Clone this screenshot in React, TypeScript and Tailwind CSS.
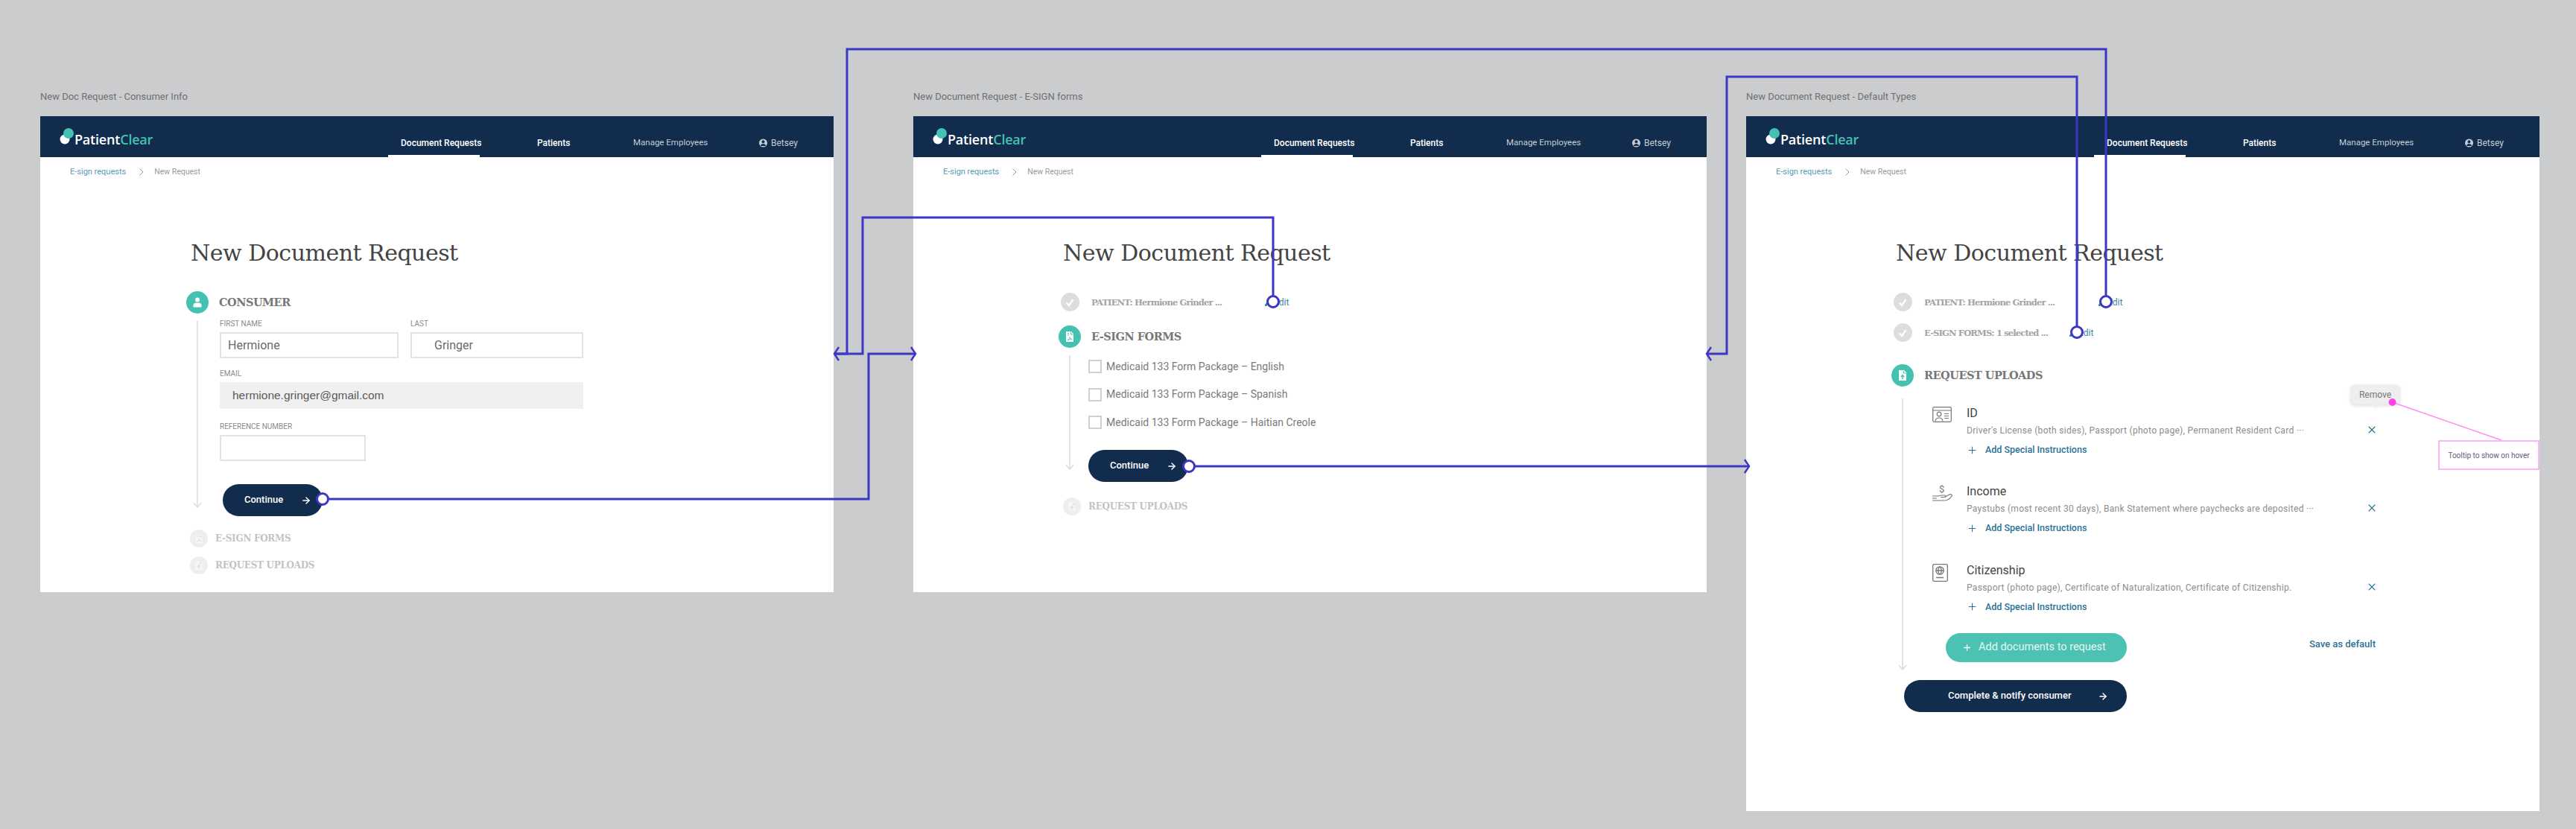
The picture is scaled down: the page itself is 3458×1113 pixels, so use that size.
import { ArrowRight, Plus, X } from "lucide-react";

const navy = "bg-[#122c4d]";
const slab = "font-['DejaVu_Serif',serif]";

function UserIcon({ size = 14 }: { size?: number }) {
  return (
    <svg width={size} height={size} viewBox="0 0 14 14" fill="#fff">
      <circle cx="7" cy="3.6" r="3" />
      <path d="M1.5 13.5v-2.6c0-2 1.6-3.4 3.4-3.4h4.2c1.800 0 3.400 1.400 3.400 3.400v2.600z" />
    </svg>
  );
}

function PdfIcon({ fill = "#fff", mark = "#45c1b1", size = 16 }: { fill?: string; mark?: string; size?: number }) {
  return (
    <svg width={size} height={size} viewBox="0 0 16 16">
      <path d="M3 1h7l3 3v11H3z" fill={fill} />
      <path d="M5 3.500h2M5 5.500h2M9.500 2v3h3" stroke={mark} strokeWidth="1" fill="none" />
      <path d="M5 12.500c2 0 3-2 3.200-3.800.5 2 2 3.200 3 3-1.800-.4-4.400 0-6.200.8z" fill="none" stroke={mark} strokeWidth="0.8" />
    </svg>
  );
}

function UploadIcon({ fill = "#fff", mark = "#45c1b1", size = 16 }: { fill?: string; mark?: string; size?: number }) {
  return (
    <svg width={size} height={size} viewBox="0 0 16 16">
      <path d="M3 1h7l3 3v11H3z" fill={fill} />
      <path d="M9.500 2v3h3" stroke={mark} strokeWidth="1" fill="none" />
      <path d="M8 13V8M5.800 10 8 7.600l2.200 2.400" stroke={mark} strokeWidth="1.400" fill="none" />
    </svg>
  );
}

function DoneDot() {
  return (
    <div className="flex h-[25px] w-[25px] shrink-0 items-center justify-center rounded-full bg-[#dddddd]">
      <svg width="14" height="14" viewBox="0 0 14 14" fill="none" stroke="#fff" strokeWidth="2.400">
        <path d="M2.500 7.500 6 11l5.500-8" />
      </svg>
    </div>
  );
}

function StepLine({ height }: { height: string }) {
  return (
    <div className={`flex w-[30px] shrink-0 flex-col items-center ${height}`}>
      <div className="w-[2px] flex-1 bg-[#e4e4e4]" />
      <svg width="12" height="8" viewBox="0 0 12 8" className="-mt-[7px]" fill="none" stroke="#dcdcdc" strokeWidth="1.500">
        <path d="M1 1l5 6 5-6" />
      </svg>
    </div>
  );
}

function EditLink() {
  return (
    <div className="flex items-center gap-[2px] text-[12px] text-[#3d86a5]">
      <svg width="10" height="10" viewBox="0 0 10 10" fill="#3d86a5">
        <path d="M0 10V7.800L6.500 1.200l2.200 2.200L2.200 10z" />
      </svg>
      <span>Edit</span>
    </div>
  );
}

function DoneRow({ text, width }: { text: string; width: string }) {
  return (
    <div className="flex items-center">
      <div className="flex w-[30px] justify-center">
        <DoneDot />
      </div>
      <div className={`ml-[14px] ${width} ${slab} text-[11.500px] font-bold leading-[14px] tracking-[-0.85px] text-[#a3a3a3]`}>{text}</div>
      <EditLink />
    </div>
  );
}

function PendingRow({ icon, label }: { icon: React.ReactNode; label: string }) {
  return (
    <div className="flex items-center">
      <div className="flex h-[24px] w-[24px] items-center justify-center rounded-full bg-[#eeeeee]">{icon}</div>
      <span className={`ml-[10px] ${slab} text-[12px] font-bold tracking-[-0.3px] text-[#c3c3c3]`}>{label}</span>
    </div>
  );
}

function ActiveHead({ icon, label, gap }: { icon: React.ReactNode; label: string; gap: string }) {
  return (
    <div className="flex items-center">
      <div className="flex h-[30px] w-[30px] items-center justify-center rounded-full bg-[#45c1b1]">{icon}</div>
      <span className={`${gap} ${slab} text-[14.500px] font-bold tracking-[-0.5px] text-[#777777]`}>{label}</span>
    </div>
  );
}

function PrimaryButton({ label, width, textWidth }: { label: string; width: string; textWidth: string }) {
  return (
    <div className={`flex h-[43px] ${width} items-center rounded-full ${navy} text-[13px] font-medium text-white`}>
      <span className={`pb-[2px] ${textWidth}`}>{label}</span>
      <ArrowRight size={14} strokeWidth={2.500} />
    </div>
  );
}

function Header() {
  return (
    <div className={`flex h-[55px] whitespace-nowrap text-[12px] font-medium ${navy}`}>
      <div className="flex w-[467px] items-start pl-[26px] pt-[14px]">
        <svg width="20" height="24" viewBox="0 0 20 24">
          <circle cx="7" cy="17" r="6.500" fill="#fff" />
          <circle cx="12" cy="9" r="7" fill="#45c1b1" />
        </svg>
        <span className="mt-[7px] font-['Open_Sans',sans-serif] text-[18px] leading-[20px] font-semibold tracking-[-0.2px] text-white">
          Patient<span className="text-[#45c1b1]">Clear</span>
        </span>
      </div>
      <div className="mr-[77px] flex h-full w-[123px] items-center border-b-[3px] border-white pl-[17px] pt-[20px] text-white">
        Document Requests
      </div>
      <div className="flex h-full w-[129px] items-center border-b-[3px] border-transparent pt-[20px] text-white">Patients</div>
      <div className="flex h-full w-[169px] items-center border-b-[3px] border-transparent pt-[20px] text-[11.500px] font-normal text-[#c4ccd6]">
        Manage Employees
      </div>
      <div className="flex h-full items-center gap-[5px] border-b-[3px] border-transparent pt-[20px] font-normal text-[#c4ccd6]">
        <svg width="11" height="14" viewBox="0 0 10 12">
          <circle cx="5" cy="6" r="5" fill="#c4ccd6" />
          <circle cx="5" cy="4.400" r="1.800" fill="#122c4d" />
          <path d="M1.800 9.600c.3-2 1.600-2.700 3.200-2.700s2.900.7 3.200 2.700z" fill="#122c4d" />
        </svg>
        Betsey
      </div>
    </div>
  );
}

function Page({ children, pad, className }: { children: React.ReactNode; pad: string; className: string }) {
  return (
    <div className={`relative w-[1065px] bg-white ${className}`}>
      <Header />
      <div className="flex items-center pl-[40px] pt-[13px] text-[11px] leading-[14px]">
        <span className="text-[#5a9ab4]">E-sign requests</span>
        <svg width="8" height="12" viewBox="0 0 8 12" fill="none" stroke="#999" strokeWidth="1" className="ml-[17px] mr-[13px]">
          <path d="M1.500 1.500 6 6l-4.500 4.500" />
        </svg>
        <span className="text-[10.500px] text-[#9a9a9a]">New Request</span>
      </div>
      <div className={pad}>
        <h1 className={`ml-[6px] mt-[82px] ${slab} text-[30px] leading-[40px] tracking-[-0.5px] text-[#444444]`}>New Document Request</h1>
        {children}
      </div>
    </div>
  );
}

function Field({ label, className, children }: { label: string; className: string; children?: React.ReactNode }) {
  return (
    <div className={className}>
      <div className="h-[16px] text-[10px] leading-[10px] text-[#8a8a8a]">{label}</div>
      {children}
    </div>
  );
}

function ConsumerScreen() {
  const inputBox = "flex h-[35px] items-center border-2 border-[#e2e2e2] text-[16px] text-[#6a6a6a]";
  return (
    <Page pad="pl-[196px]" className="h-[639px]">
      <div className="mt-[31px]">
        <ActiveHead icon={<UserIcon />} label="CONSUMER" gap="ml-[14px]" />
      </div>
      <div className="mt-[9px] flex">
        <StepLine height="h-[252px] pt-[1px]" />
        <div className="ml-[15px] w-[488px]">
          <div className="flex gap-[16px]">
            <Field label="FIRST NAME" className="w-[240px]">
              <div className={`${inputBox} pl-[9px]`}>Hermione</div>
            </Field>
            <Field label="LAST" className="w-[232px]">
              <div className={`${inputBox} pl-[30px]`}>Gringer</div>
            </Field>
          </div>
          <Field label="EMAIL" className="mt-[16px]">
            <div className="flex h-[36px] items-center bg-[#f0f0f0] pl-[17px] font-['Liberation_Sans',sans-serif] text-[15.500px] text-[#5a5a5a]">
              hermione.gringer@gmail.com
            </div>
          </Field>
          <Field label="REFERENCE NUMBER" className="mt-[19px] w-[196px]">
            <div className={inputBox} />
          </Field>
          <div className="ml-[4px] mt-[31px]">
            <PrimaryButton label="Continue" width="w-[134px] pl-[29px]" textWidth="w-[76px]" />
          </div>
        </div>
      </div>
      <div className="ml-[5px] mt-[18px]">
        <PendingRow icon={<PdfIcon fill="#f6f6f6" mark="#dddddd" size={14} />} label="E-SIGN FORMS" />
      </div>
      <div className="ml-[5px] mt-[12px]">
        <PendingRow icon={<UploadIcon fill="#f6f6f6" mark="#dddddd" size={14} />} label="REQUEST UPLOADS" />
      </div>
    </Page>
  );
}

function FormsScreen() {
  const forms = ["English", "Spanish", "Haitian Creole"];
  return (
    <Page pad="pl-[195px]" className="h-[639px]">
      <div className="mt-[33px]">
        <DoneRow text="PATIENT: Hermione Grinder ..." width="w-[233px]" />
      </div>
      <div className="mt-[19px]">
        <ActiveHead icon={<PdfIcon />} label="E-SIGN FORMS" gap="ml-[14px]" />
      </div>
      <div className="mt-[10px] flex">
        <StepLine height="h-[154px]" />
        <div className="ml-[10px]">
          <div className="mt-[6px] flex flex-col gap-[19.500px]">
            {forms.map((name) => (
              <div key={name} className="flex h-[18px] items-center">
                <div className="h-[18px] w-[18px] border-2 border-[#cfcfcf]" />
                <span className="ml-[6px] text-[14px] text-[#7a7a7a]">Medicaid 133 Form Package – {name}</span>
              </div>
            ))}
          </div>
          <div className="mt-[28px]">
            <PrimaryButton label="Continue" width="w-[134px] pl-[29px]" textWidth="w-[76px]" />
          </div>
        </div>
      </div>
      <div className="ml-[6px] mt-[21px]">
        <PendingRow icon={<UploadIcon fill="#f6f6f6" mark="#dddddd" size={14} />} label="REQUEST UPLOADS" />
      </div>
    </Page>
  );
}

function IdIcon() {
  return (
    <svg width="26" height="21" viewBox="0 0 26 21" fill="none" stroke="#777" strokeWidth="1.200">
      <rect x="0.7" y="0.7" width="24.600" height="19.600" rx="1.500" />
      <path d="M1 5h24M16 9.500h6M16 12.500h6M16 15.500h6" />
      <circle cx="9" cy="10" r="2.800" />
      <path d="M4 19.500c.3-3 2.200-4.500 5-4.500s4.700 1.500 5 4.500" />
    </svg>
  );
}

function HandIcon() {
  return (
    <svg width="29" height="24" viewBox="0 0 29 24" fill="none" stroke="#777" strokeWidth="1.200" className="-ml-[1px]">
      <text x="10" y="10" fontSize="13" fill="#777" stroke="none" fontFamily="Roboto, sans-serif">$</text>
      <path d="M1 15h7c2 0 3-1 5-1h4.500c1.500 0 1.500 2.500 0 2.500H12" />
      <path d="M18 16l6-3c2-1 4 .5 3 2-2 3-6 6-10 6H1M1 18h6" />
    </svg>
  );
}

function PassportIcon() {
  return (
    <svg width="21" height="24" viewBox="0 0 21 24" fill="none" stroke="#777" strokeWidth="1.300">
      <rect x="0.7" y="0.7" width="19.600" height="22.600" rx="1.500" />
      <circle cx="10" cy="9" r="5.200" />
      <path d="M4.800 9h10.400M10 3.800c-3 3-3 7.400 0 10.400M10 3.800c3 3 3 7.400 0 10.400M5 18.500h10" />
    </svg>
  );
}

const uploads = [
  { title: "ID", desc: "Driver's License (both sides), Passport (photo page), Permanent Resident Card ···", icon: <IdIcon /> },
  { title: "Income", desc: "Paystubs (most recent 30 days), Bank Statement where paychecks are deposited ···", icon: <HandIcon /> },
  { title: "Citizenship", desc: "Passport (photo page), Certificate of Naturalization, Certificate of Citizenship.", icon: <PassportIcon /> },
];

function UploadsScreen() {
  return (
    <Page pad="pl-[195px]" className="h-[933px]">
      <div className="mt-[33px]">
        <DoneRow text="PATIENT: Hermione Grinder ..." width="w-[234px]" />
      </div>
      <div className="mt-[16px]">
        <DoneRow text="E-SIGN FORMS: 1 selected ..." width="w-[195px]" />
      </div>
      <div className="mt-[30px]">
        <ActiveHead icon={<UploadIcon />} label="REQUEST UPLOADS" gap="ml-[14px]" />
      </div>
      <div className="mt-[16px] flex">
        <StepLine height="h-[365px]" />
        <div className="ml-[25px] w-[598px] pt-[11px]">
          <div className="flex flex-col gap-[39.400px]">
            {uploads.map((item) => (
              <div key={item.title} className="flex h-[66px] items-start">
                <div className="w-[46px] shrink-0">{item.icon}</div>
                <div className="flex-1">
                  <div className="text-[16px] leading-[18px] text-[#444444]">{item.title}</div>
                  <div className="mt-[6px] text-[12px] leading-[16px] tracking-[0.3px] text-[#8c8c8c]">{item.desc}</div>
                  <div className="mt-[10px] flex items-center gap-[10px] text-[12.500px] font-medium leading-[16px] text-[#2a7294]">
                    <Plus size={15} strokeWidth={1.600} />
                    Add Special Instructions
                  </div>
                </div>
                <X size={16} strokeWidth={1.600} className="mt-[23px] shrink-0 text-[#2a7294]" />
              </div>
            ))}
          </div>
          <div className="mt-[27px] flex items-start justify-between pl-[18px] pr-[3px]">
            <div className="flex h-[39px] w-[243px] items-center rounded-full bg-[#4bc2b2] pl-[22px] text-[14.500px] text-[#e6f7f4]">
              <Plus size={13} strokeWidth={2.500} className="text-white" />
              <span className="ml-[9px]">Add documents to request</span>
            </div>
            <span className="mt-[7px] text-[13px] font-medium leading-[16px] text-[#2a7294]">Save as default</span>
          </div>
        </div>
      </div>
      <div className="ml-[17px] mt-[13px]">
        <PrimaryButton label="Complete & notify consumer" width="w-[299px] pl-[59px]" textWidth="w-[201px]" />
      </div>
      <div className="absolute left-[811px] top-[360px] flex h-[27px] w-[67px] items-center justify-center rounded-[6px] bg-[#eeeeee] text-[12px] text-[#777777] shadow-[0_2px_4px_rgba(0,0,0,0.12)]">
        Remove
        <div className="absolute -bottom-[4px] left-[30px] h-[8px] w-[8px] rotate-45 bg-[#eeeeee]" />
      </div>
      <div className="absolute left-[929px] top-[435px] flex h-[40px] w-[136px] items-center justify-center border-2 border-[#ffb4f6] text-[10px] text-[#5a6478]">
        Tooltip to show on hover
      </div>
    </Page>
  );
}

function Artboard({ left, label, children }: { left: string; label: string; children: React.ReactNode }) {
  return (
    <div className={`absolute top-[122px] ${left}`}>
      <div className="h-[34px] text-[13px] leading-[16px] text-[#6e7073]">{label}</div>
      {children}
    </div>
  );
}

function Connectors() {
  const blue = "#3d37c6";
  const dots: [number, number][] = [
    [433, 670],
    [1596, 626],
    [1709, 405],
    [2827, 405],
    [2788, 446],
  ];
  return (
    <svg width="3458" height="1113" className="pointer-events-none absolute left-0 top-0" fill="none">
      <g stroke={blue} strokeWidth="3">
        <path d="M433 670H1166V475H1228" />
        <path d="M1709 405V292H1158V475H1121" />
        <path d="M2827 405V66H1137V475H1121" />
        <path d="M2788 446V103H2318V475H2292" />
        <path d="M1596 626H2347" />
        <path d="M1126 466l-6 9 6 9M1223 466l6 9-6 9M2297 466l-6 9 6 9M2342 617l6 9-6 9" strokeWidth="2.500" />
        {dots.map(([cx, cy]) => (
          <circle key={cx} cx={cx} cy={cy} r="7.500" fill="#fff" />
        ))}
      </g>
      <path d="M3211.500 540 3358 591" stroke="#ff8cf2" strokeWidth="1.500" />
      <circle cx="3211.500" cy="540" r="5" fill="#ff45e5" />
    </svg>
  );
}

export default function App() {
  return (
    <div className="relative h-[1113px] w-[3458px] overflow-hidden bg-[#cbccce] font-['Roboto',sans-serif]">
      <Artboard left="left-[54px]" label="New Doc Request - Consumer Info">
        <ConsumerScreen />
      </Artboard>
      <Artboard left="left-[1226px]" label="New Document Request - E-SIGN forms">
        <FormsScreen />
      </Artboard>
      <Artboard left="left-[2344px]" label="New Document Request - Default Types">
        <UploadsScreen />
      </Artboard>
      <Connectors />
    </div>
  );
}
